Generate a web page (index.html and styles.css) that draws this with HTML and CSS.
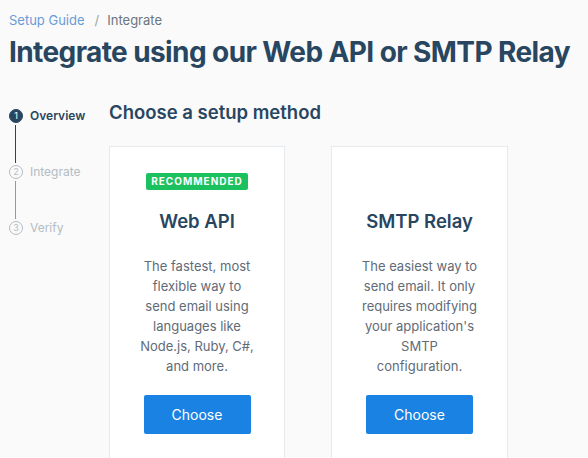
FILE: index.html
```html
<!DOCTYPE html>
<html lang="en">
<head>
<meta charset="utf-8">
<link rel="stylesheet" href="styles.css">
</head>
<body>
<div class="page">
  <nav class="crumbs">
    <a class="crumb-link">Setup Guide</a>
    <span class="crumb-sep">/</span>
    <span class="crumb-current">Integrate</span>
  </nav>
  <h1 class="title">Integrate using our Web API or SMTP Relay</h1>
  <div class="layout">
    <ol class="steps">
      <li class="step step-active"><span class="step-num">1</span><span class="step-label">Overview</span></li>
      <li class="step"><span class="step-num">2</span><span class="step-label">Integrate</span></li>
      <li class="step step-last"><span class="step-num">3</span><span class="step-label">Verify</span></li>
    </ol>
    <main class="main">
      <h2 class="subtitle">Choose a setup method</h2>
      <div class="cards">
        <section class="card">
          <span class="badge">RECOMMENDED</span>
          <h3 class="card-title">Web API</h3>
          <p class="card-text">The fastest, most flexible way to send email using languages like Node.js, Ruby, C#, and more.</p>
          <button class="btn">Choose</button>
        </section>
        <section class="card">
          <span class="badge badge-hidden">RECOMMENDED</span>
          <h3 class="card-title">SMTP Relay</h3>
          <p class="card-text">The easiest way to send email. It only requires modifying your application's SMTP configuration.</p>
          <button class="btn">Choose</button>
        </section>
      </div>
    </main>
  </div>
</div>
</body>
</html>
```
FILE: styles.css
```css
html, body {
  margin: 0;
  padding: 0;
  background: #fafafa;
  font-family: Inter, "Open Sans", sans-serif;
  color: #294661;
  overflow: hidden;
}
.page {
  padding: 12px 0 0 9px;
}
.crumbs {
  font-size: 13px;
  line-height: 16px;
  display: flex;
}
.crumb-link {
  color: #6b9bd8;
}
.crumb-sep {
  color: #9aa3ab;
  margin: 0 8px 0 10px;
}
.crumb-current {
  color: #6b7580;
}
.title {
  margin: 6px 0 0 0;
  font-size: 28px;
  line-height: 36px;
  font-weight: 700;
  color: #294661;
  letter-spacing: -0.6px;
  white-space: nowrap;
}
.layout {
  display: flex;
  margin-top: 29px;
}
.steps {
  list-style: none;
  margin: 0;
  padding: 0;
  width: 100px;
  flex: none;
  padding-top: 10px;
}
.step {
  position: relative;
  display: flex;
  height: 56px;
  align-items: flex-start;
}
.step::after {
  content: "";
  position: absolute;
  left: 6px;
  top: 16px;
  bottom: 2px;
  width: 1px;
  background: #8e99a4;
}
.step-active::after {
  background: #294661;
}
.step-last::after {
  display: none;
}
.step-num {
  width: 12px;
  height: 12px;
  border-radius: 50%;
  border: 1px solid #b3bcc4;
  color: #b3bcc4;
  font-size: 9px;
  line-height: 12px;
  text-align: center;
  flex: none;
}
.step-active .step-num {
  background: #294661;
  border-color: #294661;
  color: #fff;
}
.step-label {
  margin-left: 7px;
  font-size: 12px;
  line-height: 14px;
  color: #b3bcc4;
}
.step-active .step-label {
  color: #294661;
  font-weight: 600;
}
.main {
  flex: 1;
}
.subtitle {
  margin: 0;
  font-size: 18.5px;
  line-height: 26px;
  font-weight: 600;
  color: #294661;
}
.cards {
  display: flex;
  gap: 46px;
  margin-top: 21px;
}
.card {
  width: 176px;
  height: 330px;
  background: #fff;
  border: 1px solid #e7eaec;
  display: flex;
  flex-direction: column;
  align-items: center;
  padding: 26px 28px 0;
  box-sizing: border-box;
  flex: none;
}
.card + .card {
  width: 177px;
}
.badge {
  background: #1cc15f;
  color: #fff;
  font-size: 10px;
  font-weight: 700;
  letter-spacing: 1px;
  line-height: 17px;
  height: 17px;
  padding: 0 5px;
  border-radius: 2px;
}
.badge-hidden {
  visibility: hidden;
}
.card-title {
  margin: 18px 0 0;
  font-size: 18.5px;
  line-height: 26px;
  font-weight: 600;
  color: #294661;
  white-space: nowrap;
}
.card-text {
  margin: 22px 0 0;
  text-align: center;
  font-size: 13px;
  line-height: 20px;
  color: #5f6b77;
}
.btn {
  margin-top: 19px;
  width: 107px;
  height: 39px;
  flex: none;
  border: none;
  border-radius: 2px;
  background: #1a82e2;
  color: #fff;
  font-family: Inter, sans-serif;
  font-size: 14px;
}
```
